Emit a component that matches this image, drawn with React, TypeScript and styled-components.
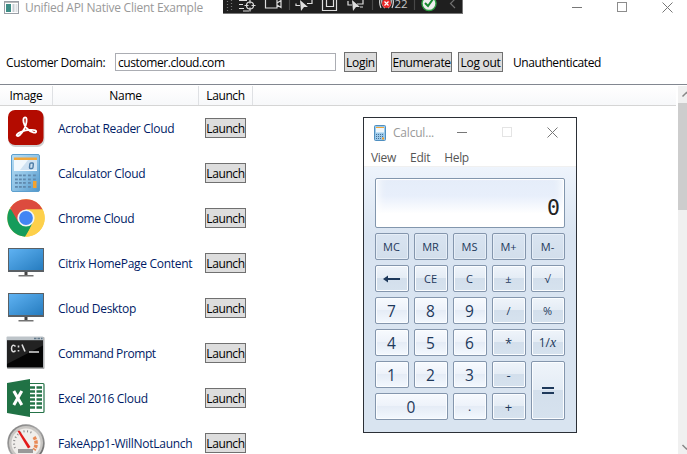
import React from "react";
import styled, { createGlobalStyle, css } from "styled-components";

const GlobalStyle = createGlobalStyle`
  * { box-sizing: border-box; }
  html, body { margin: 0; padding: 0; overflow: hidden; }
  body { background: #fff; font-family: "Open Sans", "Noto Sans", sans-serif; font-size: 12px; color: #000; }
`;

const Page = styled.div`
  position: relative;
  width: 687px;
  height: 454px;
  overflow: hidden;
  background: #fff;
  display: flex;
  flex-direction: column;
`;

const Text = styled.span<{ $ls?: number; $color?: string }>`
  white-space: nowrap;
  letter-spacing: ${(p) => p.$ls ?? -0.3}px;
  color: ${(p) => p.$color ?? "inherit"};
`;

const TitleBar = styled.header`
  display: flex;
  align-items: center;
  height: 16px;
  padding-left: 4px;
  flex: none;
  > svg { flex: none; }
  > span { margin-left: 6px; line-height: 16px; }
`;

const WindowControls = styled.div`
  display: flex;
  margin-left: auto;
  gap: 34px;
  padding-right: 14px;
  margin-top: -2px;
  svg { display: block; }
`;

const DebugBar = styled.div`
  position: absolute;
  left: 223px;
  top: 0;
  width: 240px;
  height: 14px;
  background: #1f1f1f;
  border: solid #777;
  border-width: 0 1px 1px 0;
  overflow: hidden;
  svg { display: block; }
`;

const Form = styled.section`
  display: flex;
  align-items: center;
  height: 20px;
  margin-top: 36px;
  padding-left: 6px;
  flex: none;
`;

const Caption = styled.label`
  width: 109px;
  line-height: 18px;
  padding-top: 1px;
`;

const Field = styled.div`
  width: 221px;
  height: 18px;
  border: 1px solid #abadb3;
  padding-left: 2px;
  line-height: 17px;
  margin-right: 8px;
`;

const Button = styled.button<{ $w: number; $gap?: number }>`
  width: ${(p) => p.$w}px;
  height: 20px;
  margin: 0 ${(p) => p.$gap ?? 0}px 0 0;
  padding: 0;
  border: 1px solid #707070;
  background: #ddd;
  color: #000;
  font: inherit;
  line-height: 19px;
  display: flex;
  justify-content: center;
`;

const ListArea = styled.main`
  display: flex;
  flex: 1;
  margin-top: 12px;
  border-top: 1px solid #828790;
  padding-top: 1px;
  min-height: 0;
`;

const Table = styled.div`
  width: 676px;
  margin-right: 2px;
  overflow: hidden;
`;

const HeaderRow = styled.div`
  display: flex;
  height: 20px;
  background: linear-gradient(#fff, #f7f8fa);
  border-bottom: 1px solid #d5d5d5;
`;

const HeaderCell = styled.div<{ $w: number }>`
  width: ${(p) => p.$w}px;
  border-right: 1px solid #dfe1e4;
  text-align: center;
  line-height: 20px;
`;

const Row = styled.div`
  display: flex;
  align-items: center;
  height: 45px;
  padding: 0 0 1px 6px;
  color: #001b66;
`;

const IconCell = styled.div`
  width: 52px;
  height: 40px;
  svg { display: block; }
`;

const NameCell = styled.div`
  width: 147px;
  line-height: 20px;
  padding-top: 2px;
`;

const Scrollbar = styled.div`
  width: 9px;
  background: #f0f0f0;
  display: flex;
  flex-direction: column;
  overflow: hidden;
  svg { display: block; }
`;

const Thumb = styled.div`
  height: 107px;
  background: #cdcdcd;
  margin-bottom: auto;
`;

const CalcWindow = styled.section`
  position: absolute;
  left: 363px;
  top: 117px;
  width: 214px;
  height: 316px;
  border: 1px solid #2b2f36;
  background: #fff;
`;

const CalcTitle = styled.div`
  display: flex;
  align-items: center;
  height: 29px;
  padding: 0 18px 0 9px;
  > span { margin-left: 6px; }
`;

const CalcControls = styled.div`
  display: flex;
  margin-left: auto;
  gap: 34px;
  svg { display: block; }
`;

const Menu = styled.nav`
  display: flex;
  height: 19px;
  padding-left: 7px;
  line-height: 22px;
  gap: 14px;
  color: #555;
`;

const CalcBody = styled.div`
  height: 266px;
  padding: 11px 11px;
  background: linear-gradient(#eef4fc, #d9e4f1 26%, #d9e4f0);
  border-top: 1px solid #f0f0f0;
`;

const Display = styled.div`
  height: 50px;
  border: 1px solid #8296ad;
  border-radius: 2px;
  background: linear-gradient(#e5edf9, #e8effb 35%, #fff 72%);
  box-shadow: inset 0 0 0 1px #fff, inset 8px 0 10px -6px #fff, inset -8px 0 10px -6px #fff;
  padding: 14px 4px 0 0;
  text-align: right;
  font: 21.5px/30px "DejaVu Sans Mono", monospace;
  color: #222;
`;

const Keys = styled.div`
  display: grid;
  grid-template-columns: repeat(5, 34px);
  grid-auto-rows: 27px;
  gap: 5px;
  margin-top: 5px;
`;

type Kind = "mem" | "op" | "num";

const fills = {
  mem: "linear-gradient(#d9e4f1, #d2deeb)",
  op: "linear-gradient(#eff4fa, #e4ecf5 49%, #d3dfec 50%, #d6e2ee)",
  num: "linear-gradient(#f7fafe, #edf2fa 49%, #e5ecf6 50%, #f3f8fe)",
};

const Key = styled.button<{ $kind: Kind; $cols?: number; $rows?: number }>`
  grid-column: span ${(p) => p.$cols ?? 1};
  grid-row: span ${(p) => p.$rows ?? 1};
  display: flex;
  align-items: center;
  justify-content: center;
  padding: 0 1px 0 0;
  margin: 0;
  border: 1px solid #8496ad;
  border-radius: 2px;
  background: ${(p) => fills[p.$kind]};
  box-shadow: inset 0 0 0 1px ${(p) => (p.$kind === "mem" ? "#e6eef7" : "#fbfdff")};
  color: #1e395b;
  font-family: "Open Sans", sans-serif;
  font-size: 11px;
  line-height: 20px;
  ${(p) => p.$kind === "num" && css`font-size: 15.5px;`}
  i { font-family: "Liberation Serif", serif; font-size: 14px; }
`;

const Small = styled.span`
  font-size: 12px;
`;

const Large = styled.span`
  font-size: 13px;
`;

const AcrobatIcon = () => (
  <svg width="40" height="40" viewBox="0 0 40 40">
    <rect x="2.5" y="3" width="36" height="36" rx="7" fill="#999" opacity=".45" />
    <rect x="2" y="2" width="35.5" height="35" rx="7" fill="#b30b00" />
    <path d="M18.500 9.500c2.600-1 2.600 3.500 1.200 8-1.300 4.200-5.300 10-7.700 10.500-2.800.2-1.200-2.800 3.400-4.400 4.800-1.700 14.300-2.800 14.800-.4.5 2.800-5.600 1.400-9-2.500C17.300 17.300 16.400 10.500 18.500 9.500z" fill="none" stroke="#fff" strokeWidth="1.8" />
  </svg>
);

const CalcIcon = ({ size }: { size: number }) => (
  <svg width={size} height={size} viewBox="0 0 40 40">
    <defs>
      <linearGradient id="calcBody" x2="1" y2="1">
        <stop stopColor="#b8ddf3" />
        <stop offset=".5" stopColor="#8fc3e6" />
        <stop offset="1" stopColor="#4f96ca" />
      </linearGradient>
    </defs>
    <rect x="5.500" y="1.500" width="28" height="37" rx="1.500" fill="url(#calcBody)" stroke="#5c9fce" />
    <rect x="8" y="5" width="23" height="13" fill="#f1f8fd" />
    <rect x="8" y="4.500" width="23" height="2.500" fill="#f1a63a" />
    <path d="M14 17l8-10h9v10z" fill="#cfe2f2" />
    <rect x="23.500" y="10" width="3.500" height="5.500" rx="1" fill="none" stroke="#4d7ca6" strokeWidth="1.400" transform="skewX(-6) translate(1.500 0)" />
    {[21.5, 25.5, 29, 33].map((y) =>
      [9, 13, 17, 22, 27].map((x) => <rect key={`${x}-${y}`} x={x} y={y} width="2.8" height="1.800" fill="#6089ad" />)
    )}
    <rect x="27" y="28" width="3.500" height="7" fill="#f4a22e" />
  </svg>
);

const SmallCalcIcon = () => (
  <svg width="14" height="16" viewBox="0 0 14 16">
    <rect x="1.500" y=".5" width="11" height="15" rx="1" fill="#9bcaea" stroke="#4f8fc0" />
    <rect x="3" y="2" width="8" height="5.500" fill="#edf6fc" />
    <path d="M3 2.500h8" stroke="#f1a63a" />
    <path d="M3 9.500h8M3 11.500h8M3 13.500h5" stroke="#466f98" strokeDasharray="1 1" />
    <path d="M9 13.500h2" stroke="#f19a28" strokeWidth="2" />
  </svg>
);

const ChromeIcon = () => (
  <svg width="40" height="40" viewBox="0 0 40 40">
    <circle cx="20" cy="20" r="18.700" fill="#fbcf43" />
    <path d="M20 20L3.800 10.700A18.700 18.700 0 0 0 19 38.700L28 24z" fill="#159c5b" />
    <path d="M20 11.400H36.600A18.700 18.700 0 0 0 4.200 10L12.300 24z" fill="#dc4b3e" />
    <path d="M36.600 11.400H20l8.500 9L20 38.700A18.700 18.700 0 0 0 36.600 11.400z" fill="#fdd04b" />
    <circle cx="20" cy="20" r="8.600" fill="#f4f6f5" />
    <circle cx="20" cy="20" r="6.900" fill="#4285f4" />
  </svg>
);

const DesktopIcon = () => (
  <svg width="40" height="40" viewBox="0 0 40 40">
    <defs>
      <linearGradient id="screen" x2="1" y2="1">
        <stop stopColor="#5fb2f2" />
        <stop offset="1" stopColor="#267cbf" />
      </linearGradient>
    </defs>
    <rect x="2" y="5" width="36" height="24" fill="#5a6065" />
    <rect x="3" y="6" width="34" height="21" fill="url(#screen)" />
    <path d="M18.500 29h3v3.500h-3z" fill="#444" />
    <path d="M12.500 32h15v1.500h-15z" fill="#737373" />
  </svg>
);

const PromptIcon = () => (
  <svg width="40" height="40" viewBox="0 0 40 40">
    <rect x="1" y="4" width="37.500" height="32" rx="1" fill="#aaa" />
    <rect x="0.500" y="3.500" width="37" height="31" rx="1" fill="#bdc4c9" />
    <rect x="1" y="7.500" width="36" height="27" fill="#050505" />
    <path d="M1 7.500h36v5L1 31z" fill="#222" />
    <path d="M28 5.500h2.500m1 0H34m1 0h1.500" stroke="#62788a" strokeWidth="1.600" />
    <path d="M9.500 13.500C7.500 11 5.500 12.500 5.500 15.500s2 4.500 4 2" fill="none" stroke="#ddd" strokeWidth="1.500" />
    <path d="M12.500 12.500v2m0 2.500v1.500M16 11.500l3 7M23 19h10" stroke="#ddd" strokeWidth="1.600" />
  </svg>
);

const ExcelIcon = () => (
  <svg width="40" height="40" viewBox="0 0 40 40">
    <rect x="21" y="5.500" width="17" height="29" rx="1" fill="#fff" stroke="#257348" strokeWidth="1.200" />
    {[9.5, 13.5, 17.5, 21.5, 25.5, 29.5].map((y) => (
      <path key={y} d={`M24 ${y}h5m1.500 0h5.500`} stroke="#257348" strokeWidth="2.400" />
    ))}
    <path d="M1 5L24 1v38L1 35z" fill="#207245" />
    <path d="M7.800 13l8 14M15.800 13l-8 14" stroke="#fff" strokeWidth="3" />
  </svg>
);

const GaugeIcon = () => (
  <svg width="40" height="40" viewBox="0 0 40 40">
    <defs>
      <linearGradient id="rim" x2="1" y2="1">
        <stop stopColor="#777" />
        <stop offset=".5" stopColor="#aaa" />
        <stop offset="1" stopColor="#555" />
      </linearGradient>
    </defs>
    <circle cx="20" cy="20" r="18.700" fill="url(#rim)" />
    <circle cx="20" cy="20" r="17" fill="#c9c7c4" />
    <circle cx="20" cy="20" r="14.500" fill="#f0eeeb" />
    <path d="M9 25A12 12 0 0 1 27 10.500" fill="none" stroke="#888" strokeWidth="2" strokeDasharray="1 2.500" />
    <path d="M28 14A11 11 0 0 1 28 27" fill="none" stroke="#e88a56" strokeWidth="3.500" strokeDasharray="3 1" />
    <path d="M11.500 8l2-.5L24.500 24l-2.500 1.500z" fill="#e31919" />
    <path d="M12 28h15" stroke="#999" strokeWidth="4" />
  </svg>
);

const Controls = ({ dim }: { dim?: boolean }) => (
  <>
    <svg width="11" height="11"><path d="M0 5.500h10" stroke="#777" /></svg>
    <svg width="11" height="11"><rect x=".5" y=".5" width="9" height="9" fill="none" stroke={dim ? "#e4e4e4" : "#8c8c8c"} /></svg>
    <svg width="11" height="11"><path d="M.5.5l10 10M10.500.5l-10 10" stroke="#777" /></svg>
  </>
);

const DebugGlyphs = () => (
  <svg width="239" height="13" fill="none" stroke="#dedede" strokeWidth="1.200">
    <path d="M4.500 1v11M8.500 0v12" stroke="#777" strokeDasharray="1 2" />
    <path d="M16 .5h8M16 4.500h4M16 8.500h5M20 11h6" />
    <circle cx="27" cy="5.500" r="3.500" />
    <path d="M27-.5v4M27 7.500v4M21.500 5.500h4M28.500 5.500h4" />
    <path d="M42.500-1v9h11.500v-9M54 3l4-2.500v7L54 5" />
    <path d="M66.500 0v10M149.500 0v10M191.500 0v10" stroke="#484848" />
    <path d="M73 3.500v2h4M84 3.500h5V0" />
    <path d="M77 0l8 7h-4l-3 4z" fill="#dedede" stroke="none" />
    <path d="M99.500-1v11.500h14V-1M103.500-1v7.500h7V-1" />
    <path d="M125 1v4h4M134 4h6V0M137 7h3" />
    <path d="M129 0l8 7h-4l-3 4z" fill="#dedede" stroke="none" />
    <path d="M157-1q-1 5 1 9M159-1q-1 6 3 9M170-1q1 5-1 9M168-1q1 6-3 9" />
    <circle cx="163.500" cy="3.500" r="4.500" fill="#e92727" stroke="none" />
    <path d="M161.500 1.500l4 4M165.500 1.500l-4 4" stroke="#fff" />
    <circle cx="206" cy="3.500" r="7" fill="#eee" stroke="#2e9f43" strokeWidth="1.400" />
    <path d="M202 3l3 3 5-7" stroke="#168a2f" strokeWidth="2" />
    <path d="M232-1l-4.500 4.500L232 8" stroke="#707070" />
    <text x="171.500" y="8" fill="#c8c8c8" stroke="none" fontFamily="Open Sans" fontSize="11.500" textLength="13">22</text>
  </svg>
);

const apps: { name: string; icon: React.ReactNode; ls?: number }[] = [
  { name: "Acrobat Reader Cloud", icon: <AcrobatIcon />, ls: -0.3 },
  { name: "Calculator Cloud", icon: <CalcIcon size={40} />, ls: -0.3 },
  { name: "Chrome Cloud", icon: <ChromeIcon />, ls: -0.36 },
  { name: "Citrix HomePage Content", icon: <DesktopIcon /> },
  { name: "Cloud Desktop", icon: <DesktopIcon /> },
  { name: "Command Prompt", icon: <PromptIcon />, ls: -0.42 },
  { name: "Excel 2016 Cloud", icon: <ExcelIcon /> },
  { name: "FakeApp1-WillNotLaunch", icon: <GaugeIcon />, ls: -0.27 },
];

const keys: { label: React.ReactNode; kind: Kind; cols?: number; rows?: number }[] = [
  { label: "MC", kind: "mem" }, { label: "MR", kind: "mem" }, { label: "MS", kind: "mem" },
  { label: "M+", kind: "mem" }, { label: "M-", kind: "mem" },
  { label: <svg width="18" height="8"><path d="M3 4h14" stroke="#1e395b" strokeWidth="2" /><path d="M0 4l5-3.500v7z" fill="#1e395b" /></svg>, kind: "op" },
  { label: "CE", kind: "op" }, { label: "C", kind: "op" }, { label: "±", kind: "op" }, { label: "√", kind: "op" },
  { label: "7", kind: "num" }, { label: "8", kind: "num" }, { label: "9", kind: "num" },
  { label: "/", kind: "op" }, { label: "%", kind: "op" },
  { label: "4", kind: "num" }, { label: "5", kind: "num" }, { label: "6", kind: "num" },
  { label: <Large>*</Large>, kind: "op" }, { label: <Small>1/<i>x</i></Small>, kind: "op" },
  { label: "1", kind: "num" }, { label: "2", kind: "num" }, { label: "3", kind: "num" },
  { label: <Large>-</Large>, kind: "op" },
  { label: <svg width="12" height="8"><path d="M0 1h12M0 6h12" stroke="#1e395b" strokeWidth="2" /></svg>, kind: "op", rows: 2 },
  { label: "0", kind: "num", cols: 2 }, { label: <Small>.</Small>, kind: "num" }, { label: <Large>+</Large>, kind: "op" },
];

export default function App() {
  return (
    <Page>
      <GlobalStyle />
      <TitleBar>
        <svg width="15" height="14">
          <rect x=".5" y=".5" width="14" height="12" fill="#fff" stroke="#9a9fa6" />
          <path d="M1 1.500h13" stroke="#bbb" />
          <rect x="2" y="3" width="5" height="8" fill="#3e8d86" />
          <rect x="8.500" y="3" width="2" height="8" fill="#c8ced4" />
          <rect x="11.500" y="3" width="2" height="8" fill="#dfe3e6" />
        </svg>
        <Text $color="#999" $ls={-0.26}>Unified API Native Client Example</Text>
        <WindowControls><Controls /></WindowControls>
      </TitleBar>
      <Form>
        <Caption><Text $ls={-0.38}>Customer Domain:</Text></Caption>
        <Field><Text $ls={-0.42}>customer.cloud.com</Text></Field>
        <Button $w={33} $gap={14}><Text>Login</Text></Button>
        <Button $w={61} $gap={6}><Text $ls={-0.4}>Enumerate</Text></Button>
        <Button $w={45} $gap={10}><Text>Log out</Text></Button>
        <Text $ls={-0.4}>Unauthenticated</Text>
      </Form>
      <ListArea>
        <Table>
          <HeaderRow>
            <HeaderCell $w={53}><Text>Image</Text></HeaderCell>
            <HeaderCell $w={146}><Text>Name</Text></HeaderCell>
            <HeaderCell $w={54}><Text $ls={-0.4}>Launch</Text></HeaderCell>
          </HeaderRow>
          {apps.map((app) => (
            <Row key={app.name}>
              <IconCell>{app.icon}</IconCell>
              <NameCell><Text $ls={app.ls}>{app.name}</Text></NameCell>
              <Button $w={41}><Text $ls={-0.4}>Launch</Text></Button>
            </Row>
          ))}
        </Table>
        <Scrollbar>
          <svg width="17" height="17"><path d="M4.500 10.500l4-4 4 4" fill="none" stroke="#888" strokeWidth="1.500" /></svg>
          <Thumb />
          <svg width="17" height="17"><path d="M4.500 8l4 4 4-4" fill="none" stroke="#888" strokeWidth="1.500" /></svg>
        </Scrollbar>
      </ListArea>
      <DebugBar><DebugGlyphs /></DebugBar>
      <CalcWindow>
        <CalcTitle>
          <SmallCalcIcon />
          <Text $color="#999" $ls={-0.2}>Calcul...</Text>
          <CalcControls><Controls dim /></CalcControls>
        </CalcTitle>
        <Menu><Text>View</Text><Text>Edit</Text><Text>Help</Text></Menu>
        <CalcBody>
          <Display>0</Display>
          <Keys>
            {keys.map((k, i) => (
              <Key key={i} $kind={k.kind} $cols={k.cols} $rows={k.rows}>{k.label}</Key>
            ))}
          </Keys>
        </CalcBody>
      </CalcWindow>
    </Page>
  );
}
